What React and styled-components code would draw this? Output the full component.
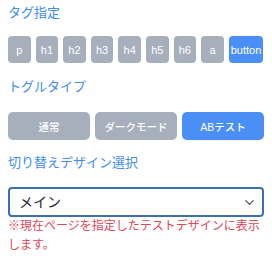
import React, { useState } from "react";
import styled, { createGlobalStyle } from "styled-components";
import { ChevronDown } from "lucide-react";

const FONT = `"Liberation Sans", "Noto Sans CJK JP", sans-serif`;

const Global = createGlobalStyle`
  html, body { margin: 0; padding: 0; background: #fff; }
  body { font-family: ${FONT}; }
`;

const Panel = styled.div`
  width: 272px;
  box-sizing: border-box;
  padding: 4px 8px 0 8px;
  display: flex;
  flex-direction: column;
`;

const Heading = styled.div`
  font-size: 13px;
  line-height: 18px;
  color: #3e8ef0;
  margin-bottom: ${(p) => p.$mb}px;
`;

const TagRow = styled.div`
  display: flex;
  gap: 5px;
  margin-bottom: 15px;
`;

const TagButton = styled.button`
  height: 27px;
  min-width: 22.6px;
  padding: 0 2px;
  border: none;
  border-radius: 4px;
  background: ${(p) => (p.$active ? "#4a8ff5" : "#a7afbd")};
  color: #fff;
  font-family: ${FONT};
  font-size: 11px;
  font-weight: 500;
  cursor: pointer;
`;

const ToggleRow = styled.div`
  display: flex;
  gap: 5px;
  margin-bottom: 14px;
`;

const ToggleButton = styled.button`
  flex: 1;
  height: 28px;
  border: none;
  border-radius: 5px;
  background: ${(p) => (p.$active ? "#4a8ff5" : "#a7afbd")};
  color: #fff;
  font-family: ${FONT};
  font-size: 10.5px;
  font-weight: 500;
  cursor: pointer;
`;

const SelectWrap = styled.div`
  position: relative;
  height: 30px;
`;

const Select = styled.select`
  appearance: none;
  width: 100%;
  height: 30px;
  box-sizing: border-box;
  border: 2px solid #3a6fb0;
  border-radius: 4px;
  padding: 0 30px 0 9px;
  font-family: ${FONT};
  font-size: 14px;
  color: #1e2a3a;
  background: #fff;
  outline: none;
`;

const Chevron = styled.span`
  position: absolute;
  right: 7px;
  top: 8px;
  display: flex;
  pointer-events: none;
  color: #555b63;
`;

const Note = styled.p`
  margin: 0;
  font-size: 12px;
  line-height: 19px;
  color: #e0475a;
`;

const tags = ["p", "h1", "h2", "h3", "h4", "h5", "h6", "a", "button"];
const toggles = ["通常", "ダークモード", "ABテスト"];

export default function App() {
  const [tag, setTag] = useState("button");
  const [toggle, setToggle] = useState("ABテスト");
  return (
    <>
      <Global />
      <Panel>
        <Heading $mb={14}>タグ指定</Heading>
        <TagRow>
          {tags.map((t) => (
            <TagButton key={t} $active={t === tag} onClick={() => setTag(t)}>
              {t}
            </TagButton>
          ))}
        </TagRow>
        <Heading $mb={16}>トグルタイプ</Heading>
        <ToggleRow>
          {toggles.map((t) => (
            <ToggleButton key={t} $active={t === toggle} onClick={() => setToggle(t)}>
              {t}
            </ToggleButton>
          ))}
        </ToggleRow>
        <Heading $mb={15}>切り替えデザイン選択</Heading>
        <SelectWrap>
          <Select defaultValue="main">
            <option value="main">メイン</option>
            <option value="test">テスト</option>
          </Select>
          <Chevron>
            <ChevronDown size={15} strokeWidth={2.2} />
          </Chevron>
        </SelectWrap>
        <Note>※現在ページを指定したテストデザインに表示します。</Note>
      </Panel>
    </>
  );
}
